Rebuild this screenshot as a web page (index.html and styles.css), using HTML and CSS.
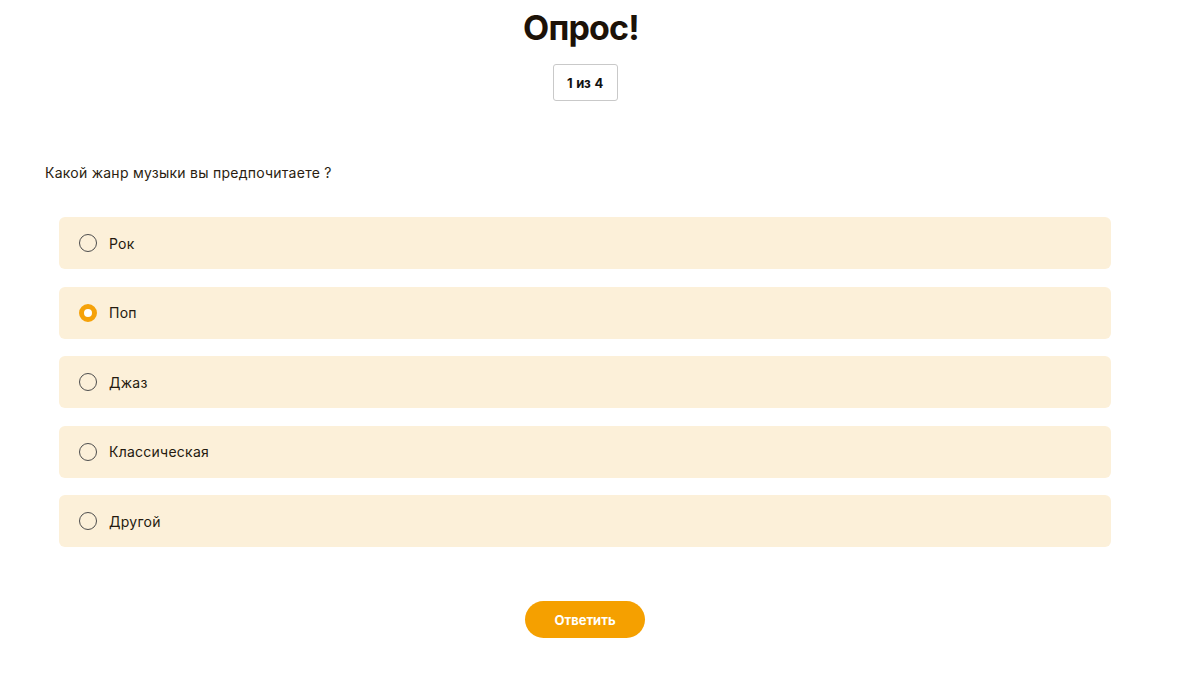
FILE: index.html
```html
<!DOCTYPE html>
<html lang="ru">
<head>
<meta charset="utf-8">
<title>Опрос</title>
<link rel="stylesheet" href="styles.css">
</head>
<body>
<main class="survey">
  <h1 class="title">Опрос!</h1>
  <div class="counter">1 из 4</div>
  <p class="question">Какой жанр музыки вы предпочитаете ?</p>
  <div class="options">
    <label class="option"><span class="radio"></span><span class="label">Рок</span></label>
    <label class="option"><span class="radio checked"></span><span class="label">Поп</span></label>
    <label class="option"><span class="radio"></span><span class="label">Джаз</span></label>
    <label class="option"><span class="radio"></span><span class="label">Классическая</span></label>
    <label class="option"><span class="radio"></span><span class="label">Другой</span></label>
  </div>
  <div class="actions"><button class="submit">Ответить</button></div>
</main>
</body>
</html>
```
FILE: styles.css
```css
* { box-sizing: border-box; }
html, body { margin: 0; padding: 0; background: #fff; }
body { font-family: "Inter", "Lato", "Liberation Sans", sans-serif; color: #23190d; }
.survey { width: 1198px; padding: 0 73px 0 45px; display: flex; flex-direction: column; }
.title { margin: 8px 0 0; text-align: center; font-size: 34px; font-weight: 700; line-height: 40px; color: #1c1208; letter-spacing: -0.8px; padding-right: 8px; }
.counter { align-self: center; margin: 16px 0 0; width: 65px; height: 37px; border: 1px solid #c9c9c9; border-radius: 3px; display: flex; align-items: center; justify-content: center; font-size: 13px; font-weight: 700; color: #111; letter-spacing: -0.2px; word-spacing: 1px; }
.question { margin: 62px 0 0; font-size: 14px; line-height: 20px; color: #2a1d10; letter-spacing: 0.25px; }
.options { margin: 34px 14px 0; display: flex; flex-direction: column; gap: 17.5px; }
.option { height: 52px; background: #fcf0d9; border-radius: 6px; display: flex; align-items: center; padding-left: 20px; gap: 12px; font-size: 14px; color: #241a0f; letter-spacing: 0.25px; }
.radio { width: 18px; height: 18px; border-radius: 50%; border: 1.5px solid #4d4d4d; flex: none; }
.radio.checked { border: 5.5px solid #f5a20a; background: #fff; }
.actions { display: flex; justify-content: center; margin-top: 54px; }
.submit { width: 120px; height: 37px; border: 0; border-radius: 19px; background: #f5a000; color: #fff; font-family: inherit; font-size: 13px; font-weight: 700; letter-spacing: 0; }
```
